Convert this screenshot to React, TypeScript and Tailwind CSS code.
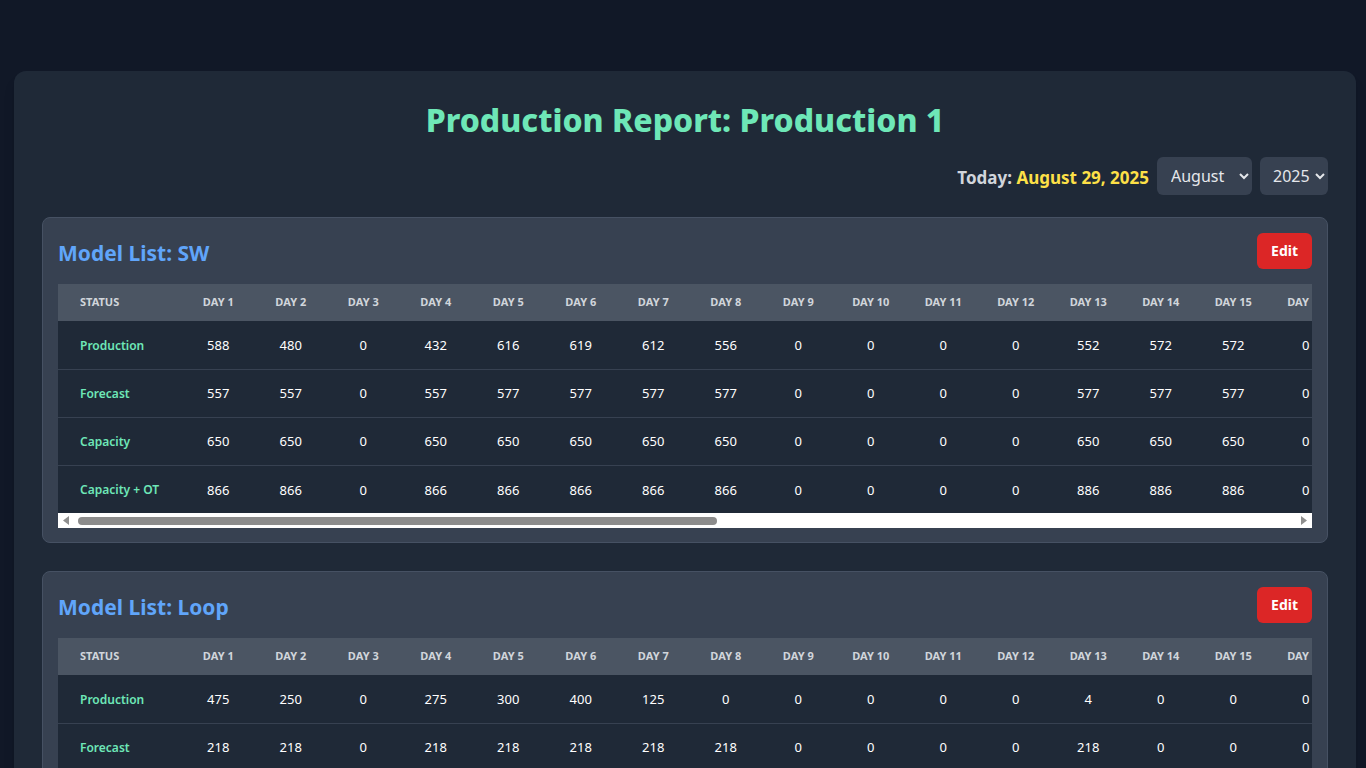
import React, { useState } from 'react';

type Row = { label: string; values: number[] };
type Model = { name: string; rows: Row[] };

const DAYS = Array.from({ length: 31 }, (_, i) => i + 1);

const pad = (vals: number[]) => [...vals, ...Array(31 - vals.length).fill(0)];

const MODELS: Model[] = [
    {
        name: 'SW',
        rows: [
            { label: 'Production', values: pad([588, 480, 0, 432, 616, 619, 612, 556, 0, 0, 0, 0, 552, 572, 572, 0]) },
            { label: 'Forecast', values: pad([557, 557, 0, 557, 577, 577, 577, 577, 0, 0, 0, 0, 577, 577, 577, 0]) },
            { label: 'Capacity', values: pad([650, 650, 0, 650, 650, 650, 650, 650, 0, 0, 0, 0, 650, 650, 650, 0]) },
            { label: 'Capacity + OT', values: pad([866, 866, 0, 866, 866, 866, 866, 866, 0, 0, 0, 0, 886, 886, 886, 0]) },
        ],
    },
    {
        name: 'Loop',
        rows: [
            { label: 'Production', values: pad([475, 250, 0, 275, 300, 400, 125, 0, 0, 0, 0, 0, 4, 0, 0, 0]) },
            { label: 'Forecast', values: pad([218, 218, 0, 218, 218, 218, 218, 218, 0, 0, 0, 0, 218, 0, 0, 0]) },
            { label: 'Capacity', values: pad([300, 300, 0, 300, 300, 300, 300, 300, 0, 0, 0, 0, 300, 0, 0, 0]) },
            { label: 'Capacity + OT', values: pad([420, 420, 0, 420, 420, 420, 420, 420, 0, 0, 0, 0, 420, 0, 0, 0]) },
        ],
    },
];

const MONTHS = ['January', 'February', 'March', 'April', 'May', 'June', 'July', 'August', 'September', 'October', 'November', 'December'];

// classic horizontal scrollbar look (white track, grey rounded thumb, arrow buttons)
const ScrollBar: React.FC = () => (
    <div className="h-[15px] bg-white flex items-center">
        <svg width="15" height="15" viewBox="0 0 15 15" className="shrink-0">
            <path d="M5 7.5 L11 3 L11 12 Z" fill="#8f8f8f" />
        </svg>
        <div className="ml-[5px] w-[639px] h-[8px] rounded-full bg-[#8c8c8c]" />
        <div className="flex-1" />
        <svg width="15" height="15" viewBox="0 0 15 15" className="shrink-0">
            <path d="M10 7.5 L4 3 L4 12 Z" fill="#8f8f8f" />
        </svg>
    </div>
);

const ModelCard: React.FC<{ model: Model }> = ({ model }) => (
    <div className="bg-[#374151] border border-[#465163] rounded-lg px-[15px] pt-[15px] pb-[14px]">
        {/* Card header */}
        <div className="flex items-center justify-between mb-[15px]">
            <h2 className="text-[21px] leading-[28px] pt-[4px] font-bold text-[#60a5fa]">Model List: {model.name}</h2>
            <button className="h-[36px] px-[14px] bg-[#dc2626] text-white text-sm font-bold rounded-md">Edit</button>
        </div>

        {/* Table */}
        <div className="overflow-hidden">
            <table className="table-fixed border-collapse w-[2372px]">
                <thead>
                    <tr className="bg-[#4b5563] h-[37px]">
                        <th className="w-[124px] pl-[22px] text-left text-[11px] font-bold uppercase text-[#d1d5db]">Status</th>
                        {DAYS.map((d) => (
                            <th key={d} className="w-[72.5px] text-center text-[11px] font-bold uppercase text-[#d1d5db] whitespace-nowrap">
                                Day {d}
                            </th>
                        ))}
                    </tr>
                </thead>
                <tbody>
                    {model.rows.map((row) => (
                        <tr key={row.label} className="bg-[#1f2937] h-[48px] border-b border-[#374151] last:border-b-0">
                            <td className="pl-[22px] pt-[2px] text-[12px] font-semibold text-[#6ee7b7] whitespace-nowrap">{row.label}</td>
                            {row.values.map((v, i) => (
                                <td key={i} className="pt-[2px] text-center text-[13px] text-white">{v}</td>
                            ))}
                        </tr>
                    ))}
                </tbody>
            </table>
        </div>
        <ScrollBar />
    </div>
);

const App: React.FC = () => {
    const [month, setMonth] = useState('August');
    const [year, setYear] = useState('2025');

    return (
        <div className="h-screen overflow-hidden bg-[#111827] font-['Noto_Sans',sans-serif] pt-[71px] pl-[14px] pr-[10px]">
            <div className="bg-[#1f2937] rounded-xl px-[28px] pt-[30px] pb-8 shadow-lg">
                <h1 className="text-center text-[32px] leading-[38px] font-extrabold text-[#6ee7b7]">
                    Production Report: Production 1
                </h1>

                <div className="flex items-center justify-end gap-2 mt-[18px]">
                    <span className="text-[17px] font-bold text-[#d1d5db] pt-[3px]">
                        Today: <span className="text-[#fde047]">August 29, 2025</span>
                    </span>
                    <select
                        value={month}
                        onChange={(e) => setMonth(e.target.value)}
                        className="h-[38px] w-[95px] bg-[#374151] text-[#e5e7eb] text-[16px] rounded-md pl-[10px] pr-[4px] border-0"
                    >
                        {MONTHS.map((m) => (
                            <option key={m}>{m}</option>
                        ))}
                    </select>
                    <select
                        value={year}
                        onChange={(e) => setYear(e.target.value)}
                        className="h-[38px] w-[68px] bg-[#374151] text-[#e5e7eb] text-[16px] rounded-md pl-[9px] pr-[2px] border-0"
                    >
                        {['2024', '2025', '2026'].map((y) => (
                            <option key={y}>{y}</option>
                        ))}
                    </select>
                </div>

                <div className="flex flex-col gap-[28px] mt-[22px]">
                    {MODELS.map((m) => (
                        <ModelCard key={m.name} model={m} />
                    ))}
                </div>
            </div>
        </div>
    );
};

export default App;
